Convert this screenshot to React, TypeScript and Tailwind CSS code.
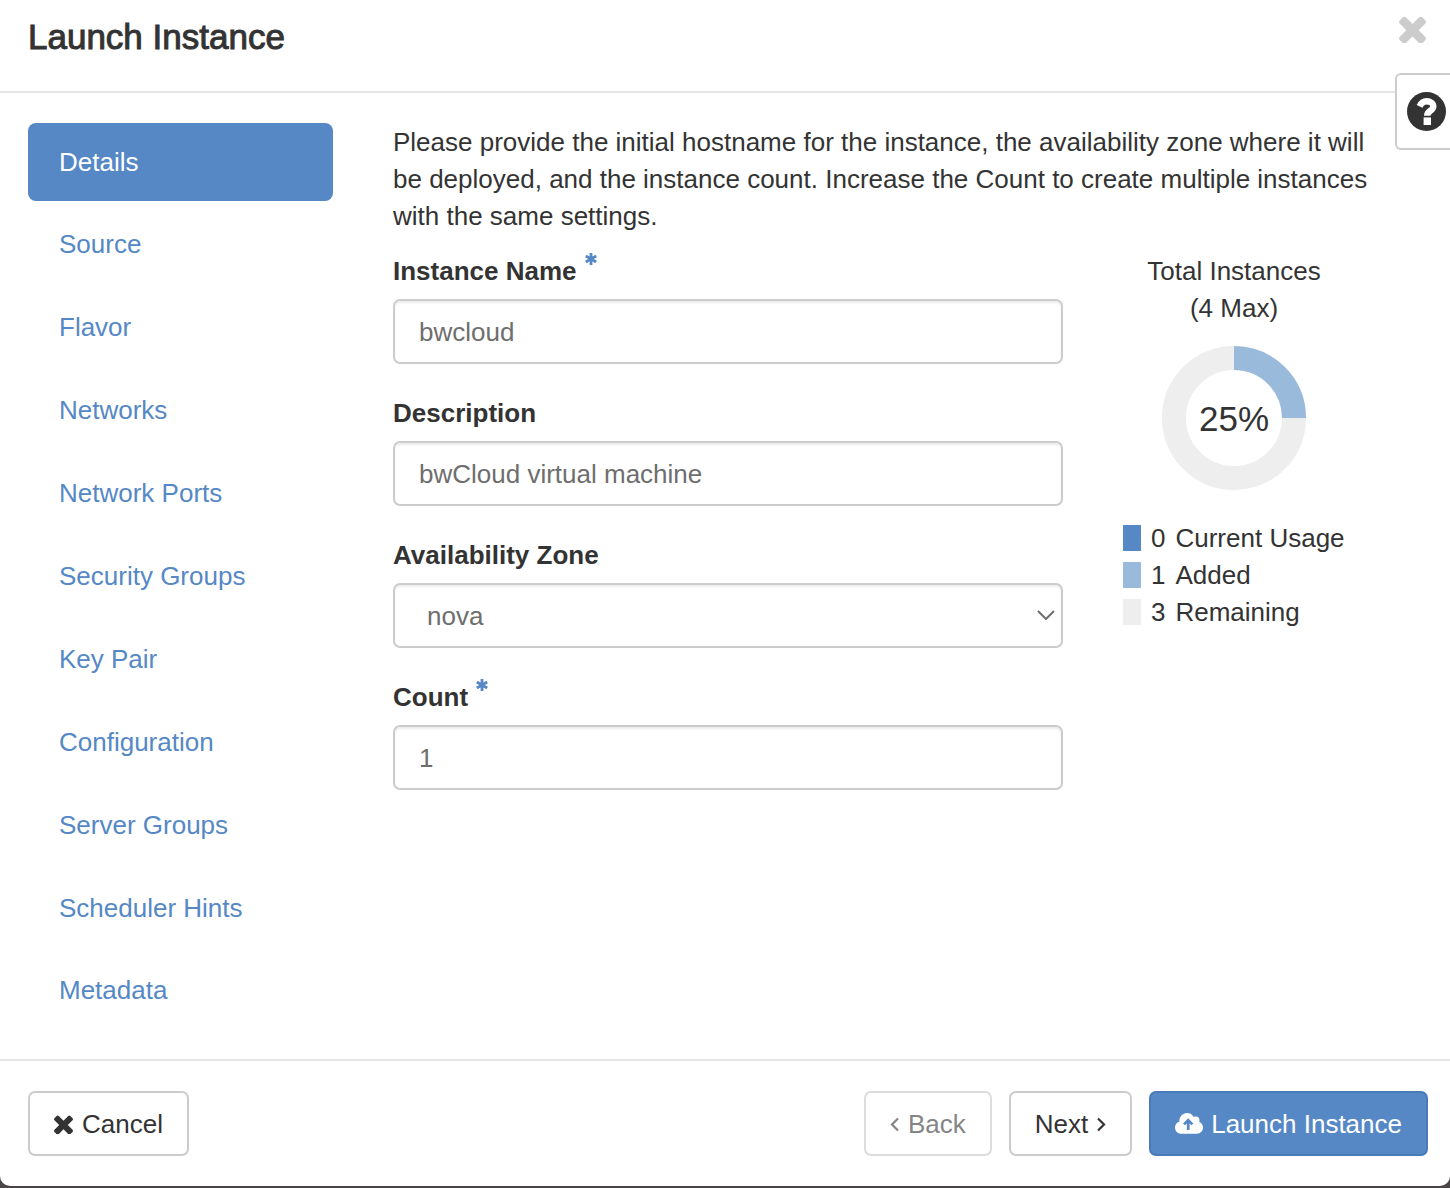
import { useState } from "react";
import type { ReactNode } from "react";

const steps = [
  "Details",
  "Source",
  "Flavor",
  "Networks",
  "Network Ports",
  "Security Groups",
  "Key Pair",
  "Configuration",
  "Server Groups",
  "Scheduler Hints",
  "Metadata",
];

const legend = [
  { count: 0, label: "Current Usage", swatch: "bg-[#5588c5]" },
  { count: 1, label: "Added", swatch: "bg-[#9abadc]" },
  { count: 3, label: "Remaining", swatch: "bg-[#eeeeee]" },
];

function CloseIcon({ className }: { className: string }) {
  return (
    <svg viewBox="302 302 1188 1188" className={className} fill="currentColor" aria-hidden="true">
      <path d="M1490 1290q0 40-28 68l-136 136q-28 28-68 28t-68-28l-294-294-294 294q-28 28-68 28t-68-28l-136-136q-28-28-28-68t28-68l294-294-294-294q-28-28-28-68t28-68l136-136q28-28 68-28t68 28l294 294 294-294q28-28 68-28t68 28l136 136q28 28 28 68t-28 68l-294 294 294 294q28 28 28 68z" />
    </svg>
  );
}

function HelpIcon() {
  return (
    <svg viewBox="0 0 39 39" className="size-[39px] shrink-0" fill="none" aria-hidden="true">
      <circle cx="19.5" cy="19.5" r="19.5" fill="currentColor" />
      <path d="M12.6 14.4C14.200 11 16.500 9.300 19.600 9.300C23.400 9.300 26.300 11.500 26.300 14.400C26.300 18.800 20.200 18.600 20.200 23.800" stroke="#fff" strokeWidth="6.4" />
      <path d="M16.600 25.400h7.400v7.600h-7.400z" fill="#fff" />
    </svg>
  );
}

function CloudUploadIcon() {
  return (
    <svg viewBox="0 0 28 24" className="h-6 w-7" aria-hidden="true">
      <path
        d="M6.500 20.700C2.700 20.700 0 18 0 14.400C0 11.500 1.800 9.300 4.400 8.400C4.200 3.600 7.600 0 12 0C15 0 17.300 1.600 18.600 4C19.400 3.600 20 3.500 20.800 3.500C23 3.500 24.600 5.200 24.500 7.300C24.500 8 24.400 8.500 24.200 9C26.500 9.800 28 12 28 14.600C28 18 25.400 20.700 22 20.700Z"
        fill="currentColor"
      />
      <path d="M13.200 17V7M9 11.400l4.200-4.300 4.200 4.300" fill="none" stroke="#5588c5" strokeWidth="2.700" />
    </svg>
  );
}

function Required() {
  return (
    <svg viewBox="0 0 12 12" className="mt-[-25px] ml-2 size-3 text-[#5588c5]" stroke="currentColor" strokeWidth="2.800" aria-label="required">
      <path d="M6 0v12M0.800 3l10.400 6M11.200 3l-10.400 6" />
    </svg>
  );
}

function Angle({ d }: { d: string }) {
  return (
    <svg viewBox="0 0 11 16" className="h-4 w-[11px]" fill="none" stroke="currentColor" strokeWidth="2.2" aria-hidden="true">
      <path d={d} />
    </svg>
  );
}

function Field({ id, label, required, children }: { id: string; label: string; required?: boolean; children: ReactNode }) {
  return (
    <div>
      <label htmlFor={id} className="mb-[10px] flex h-9 items-center font-bold">
        {label}
        {required && <Required />}
      </label>
      {children}
    </div>
  );
}

const control =
  "block h-[65px] w-full rounded-[7px] border-2 border-[#cccccc] bg-white px-6 pt-[2px] text-[#6e6e6e] shadow-[inset_0_2px_2px_rgba(0,0,0,0.08)] outline-none";
const button = "flex h-[65px] items-center rounded-[7px] border-2 px-6 pt-[2px]";

export default function App() {
  const [active, setActive] = useState("Details");
  return (
    <div className="min-h-screen bg-[#4a4648] font-['Liberation_Sans',Arial,sans-serif] text-[26px] leading-[37px] text-[#333333]">
      <main className="relative flex min-h-[calc(100vh-2px)] flex-col rounded-b-[10px] bg-white">
        <header className="flex h-[93px] items-start justify-between border-b-2 border-[#e5e5e5] px-7">
          <h1 className="mt-[15px] text-[35px] leading-[44px] [-webkit-text-stroke:1px_#333333]">Launch Instance</h1>
          <button type="button" aria-label="Close" className="mt-4 -mr-1 text-[#cccccc]">
            <CloseIcon className="size-[27px]" />
          </button>
        </header>
        <button type="button" aria-label="Help" className="absolute top-[73px] right-0 flex h-[77px] w-[55px] items-center rounded-l-[6px] border-2 border-r-0 border-[#cccccc] bg-white pl-[10px]">
          <HelpIcon />
        </button>

        <div className="flex flex-1 pt-[30px] pr-[60px] pb-7 pl-7">
          <nav className="w-[305px] shrink-0" aria-label="Steps">
            <ul className="flex h-[907px] flex-col justify-between">
              {steps.map((step) => (
                <li key={step}>
                  <a
                    href="#"
                    onClick={() => setActive(step)}
                    className={
                      step === active
                        ? "flex h-[78px] items-center rounded-[8px] bg-[#5588c5] px-[31px] text-white"
                        : "flex h-[78px] items-center rounded-[8px] px-[31px] text-[#5588c5]"
                    }
                  >
                    {step}
                  </a>
                </li>
              ))}
            </ul>
          </nav>

          <section className="ml-[60px] min-w-0 flex-1 pt-px">
            <p>
              Please provide the initial hostname for the instance, the availability zone where it will be deployed, and
              the instance count. Increase the Count to create multiple instances with the same settings.
            </p>
            <div className="mt-[18px] flex gap-[60px]">
              <form className="flex min-w-0 flex-1 flex-col gap-[31px]">
                <Field id="name" label="Instance Name" required>
                  <input id="name" type="text" defaultValue="bwcloud" className={control} />
                </Field>
                <Field id="description" label="Description">
                  <input id="description" type="text" defaultValue="bwCloud virtual machine" className={control} />
                </Field>
                <Field id="zone" label="Availability Zone">
                  <div className="relative">
                    <select id="zone" className={`${control} appearance-none pl-8`}>
                      <option>nova</option>
                    </select>
                    <svg viewBox="0 0 18 10" className="pointer-events-none absolute top-[27px] right-2 h-[10px] w-[18px]" fill="none" stroke="#6e6e6e" strokeWidth="2" aria-hidden="true">
                      <path d="M1 1l8 8 8-8" />
                    </svg>
                  </div>
                </Field>
                <Field id="count" label="Count" required>
                  <input id="count" type="text" inputMode="numeric" defaultValue="1" className={control} />
                </Field>
              </form>

              <aside className="w-[267px] shrink-0">
                <div className="w-[222px]">
                  <p className="text-center">
                    Total Instances
                    <br />
                    (4 Max)
                  </p>
                  <div className="mx-auto mt-[19px] grid size-36 place-items-center">
                    <svg viewBox="0 0 144 144" className="col-start-1 row-start-1 size-36" fill="none" strokeWidth="24" aria-hidden="true">
                      <circle cx="72" cy="72" r="60" stroke="#eeeeee" />
                      <path d="M72 12a60 60 0 0 1 60 60" stroke="#9abadc" />
                    </svg>
                    <span className="col-start-1 row-start-1 text-[35px]">25%</span>
                  </div>
                </div>
                <ul className="mt-[30px]">
                  {legend.map((item) => (
                    <li key={item.label} className="flex items-center gap-[10px]">
                      <span className={`mb-[2px] h-[26px] w-[18px] ${item.swatch}`} />
                      <span>{item.count}</span>
                      <span>{item.label}</span>
                    </li>
                  ))}
                </ul>
              </aside>
            </div>
          </section>
        </div>

        <footer className="flex justify-between border-t-2 border-[#e5e5e5] pt-[30px] pr-[22px] pb-[30px] pl-7">
          <button type="button" className={`${button} gap-[9px] border-[#cccccc]`}>
            <CloseIcon className="size-[19px]" />
            Cancel
          </button>
          <div className="flex gap-[17px]">
            <button type="button" disabled className={`${button} gap-[7px] border-[#dddddd] text-[#858585]`}>
              <Angle d="M8 1.500L2 7.500l6 6" />
              Back
            </button>
            <button type="button" className={`${button} gap-[7px] border-[#cccccc]`}>
              Next
              <Angle d="M3 1.500l6 6-6 6" />
            </button>
            <button type="button" className={`${button} gap-2 border-[#4a7bb9] bg-[#5588c5] text-white`}>
              <CloudUploadIcon />
              Launch Instance
            </button>
          </div>
        </footer>
      </main>
    </div>
  );
}
